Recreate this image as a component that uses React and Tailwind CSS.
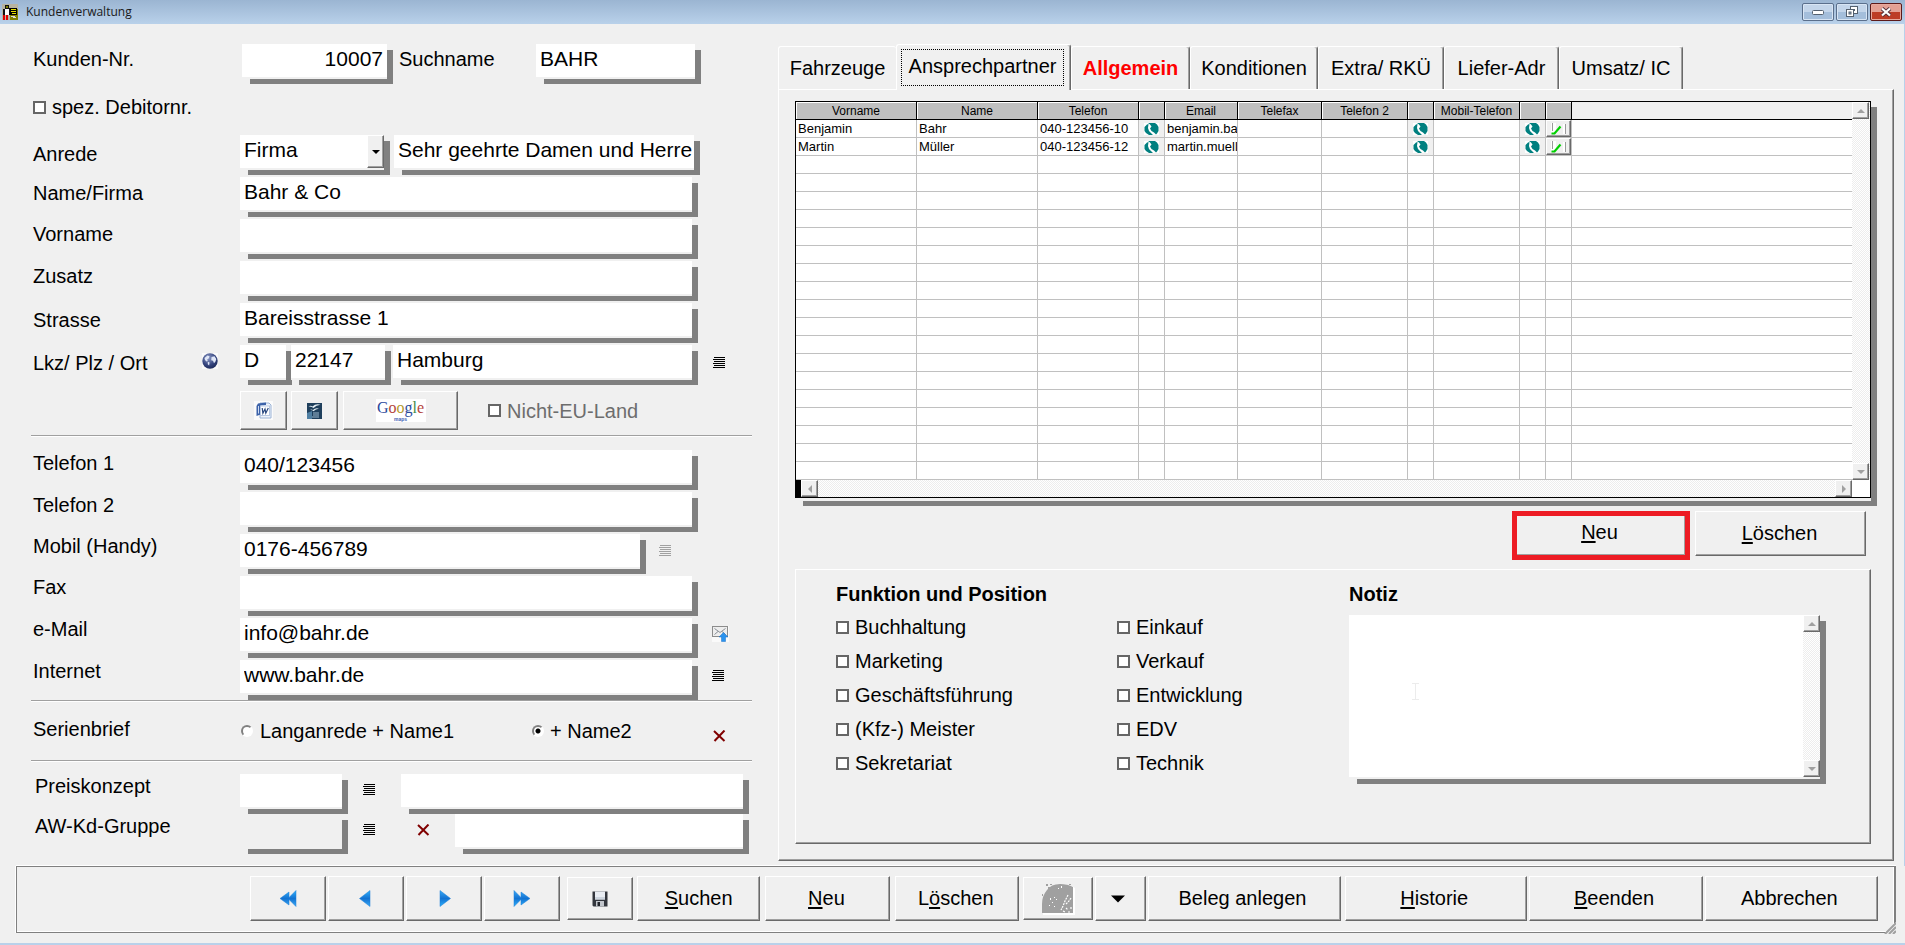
import React, { useState } from 'react';
import clsx from 'clsx';

const SHADOW = 'shadow-[7px_5px_0_-1px_#808080,7px_6px_0_-1px_#808080]';
const BEVEL =
  'border border-t-white border-l-white border-r-[#696969] border-b-[#696969] shadow-[inset_-1px_-1px_0_#a0a0a0]';
const DITHER =
  'bg-[repeating-conic-gradient(#ededed_0_25%,#ffffff_0_50%)] bg-[length:2px_2px]';

const TABS = [
  { name: 'Fahrzeuge', width: 'w-[118px]' },
  { name: 'Ansprechpartner', width: 'w-[175px]' },
  { name: 'Allgemein', width: 'w-[119px]', text: 'text-[#ff0000] font-bold' },
  { name: 'Konditionen', width: 'w-[128px]' },
  { name: 'Extra/ RKÜ', width: 'w-[126px]' },
  { name: 'Liefer-Adr', width: 'w-[115px]' },
  { name: 'Umsatz/ IC', width: 'w-[124px]' },
];

const COLUMNS = [
  { key: 'vorname', title: 'Vorname', width: 'w-[121px]' },
  { key: 'name', title: 'Name', width: 'w-[121px]' },
  { key: 'telefon', title: 'Telefon', width: 'w-[101px]' },
  { key: 'call1', title: '', width: 'w-[26px]', type: 'call' },
  { key: 'email', title: 'Email', width: 'w-[73px]' },
  { key: 'telefax', title: 'Telefax', width: 'w-[84px]' },
  { key: 'telefon2', title: 'Telefon 2', width: 'w-[86px]' },
  { key: 'call2', title: '', width: 'w-[26px]', type: 'call' },
  { key: 'mobil', title: 'Mobil-Telefon', width: 'w-[86px]' },
  { key: 'call3', title: '', width: 'w-[26px]', type: 'call' },
  { key: 'edit', title: '', width: 'w-[26px]', type: 'edit' },
];

const CONTACTS = [
  { vorname: 'Benjamin', name: 'Bahr', telefon: '040-123456-10', email: 'benjamin.ba' },
  { vorname: 'Martin', name: 'Müller', telefon: '040-123456-12', email: 'martin.muell' },
];

const ROWS = [...CONTACTS, ...Array(18).fill(null)];

const FUNCTIONS_LEFT = ['Buchhaltung', 'Marketing', 'Geschäftsführung', '(Kfz-) Meister', 'Sekretariat'];
const FUNCTIONS_RIGHT = ['Einkauf', 'Verkauf', 'Entwicklung', 'EDV', 'Technik'];

/* ---------- Icons ---------- */

const AppIcon = () => (
  <svg width="16" height="16" viewBox="0 0 16 16" shapeRendering="crispEdges">
    <rect width="16" height="16" fill="#b8b4a0" />
    <path d="M8 5h8v11H8z" fill="#808000" />
    <path d="M7 4h8v7H7z" fill="#000" />
    <path d="M9 5h5v1H9zM9 7h5v1H9zM10 9h4v1h-4z" fill="#e8e000" />
    <path d="M9 12h4v1H9zM11 13h3v1h-3z" fill="#ddd" />
    <path d="M3 1h4v4H3zM1 5h2v6H1zM7 5h1v5H7z" fill="#111" />
    <path d="M4 2h2v2H4z" fill="#808000" />
    <path d="M3 5h4v6H3z" fill="#fff" />
    <path d="M1 11h2v5H1zM4 11h2v5H4z" fill="#e00000" />
  </svg>
);

const ListIcon = ({ color = '#000' }) => (
  <svg width="13" height="12" viewBox="0 0 13 12" shapeRendering="crispEdges">
    <path d="M1 0h11v1H1zM0 2h12v1H0zM1 4h11v1H1zM0 6h12v1H0zM1 8h11v1H1zM0 10h12v1H0z" fill={color} />
  </svg>
);

const DeleteIcon = () => (
  <svg width="13" height="12" viewBox="0 0 13 12">
    <path d="M1 1L11.500 11M11.500 0.500L1.500 11" stroke="#800000" strokeWidth="2" fill="none" />
  </svg>
);

const GlobeIcon = () => (
  <svg width="16" height="16" viewBox="0 0 16 16">
    <defs>
      <radialGradient id="globe" cx="0.4" cy="0.3" r="0.75">
        <stop offset="0" stopColor="#8f9cc8" />
        <stop offset="0.6" stopColor="#36467f" />
        <stop offset="1" stopColor="#1a2757" />
      </radialGradient>
    </defs>
    <rect width="16" height="16" fill="#fafafa" />
    <circle cx="8" cy="8" r="7.700" fill="url(#globe)" />
    <path d="M2.500 5l3-2.500 2 .8-.6 2-1.700 1.200.6 1.500-1.300.4L3 7zM5.800 8.800l1.800.8-.5 3-1.300-1.300zM9.500 4l3-.8 1.800 2.800-.8 2.500-1.500 1.800-1-2.500-1.800-.6z" fill="#dfe6f7" />
  </svg>
);

const WordIcon = () => (
  <svg width="19" height="19" viewBox="0 0 19 19">
    <rect width="19" height="19" fill="#fbfbfb" />
    <path d="M6 2h9l2 2v13H6z" fill="#eef3fb" stroke="#9db4d6" />
    <path d="M4 2.500L12 1.500v2.500L6.500 4.500v9L2.500 15V5z" fill="#3c62a9" />
    <path d="M4.500 5v7.500" stroke="#cfdcf2" />
    <rect x="6.500" y="5" width="9" height="9.500" fill="#fff" stroke="#b8c8e2" />
    <path d="M8.200 7l.7 5.200L11 8l.8 4.200L14.300 7" fill="none" stroke="#27467f" strokeWidth="1.200" />
  </svg>
);

const WriterIcon = () => (
  <svg width="15" height="16" viewBox="0 0 15 16">
    <rect width="15" height="16" fill="#1f3f5c" />
    <path d="M0 10l5-2v8H0z" fill="#4f7fa3" />
    <path d="M1.500 3.500q2-1.500 4 0 3-3 8-1.800-4.500.6-7 3.300Q4.500 3 1.500 3.500zM3 7q1.500-1.200 3 0 2.500-2.500 6-1.300-3.500.3-5.500 2.500Q5 6.500 3 7z" fill="#e6f0f6" />
    <path d="M6 10h6M6 12h6M5 14h7" stroke="#9fbcd0" />
  </svg>
);

const MailIcon = () => (
  <svg width="17" height="16" viewBox="0 0 17 16">
    <rect width="17" height="16" fill="#fafafa" />
    <rect x="0.500" y="0.500" width="15" height="10" fill="#eeeeee" stroke="#8c8c8c" />
    <path d="M2.500 2.500L8 6.500l5.500-4M2.500 8.500L6 5.500M13.500 8.500L10 5.500" fill="none" stroke="#8a8f96" />
    <path d="M11.500 6.500l4.500 4.500h-2.500v4.500h-4V11H7z" fill="#2b93ee" stroke="#1a6fc4" strokeWidth="0.500" />
  </svg>
);

const NavIcon = ({ double, back }) => (
  <svg width="18" height="17" viewBox="0 0 18 17" className={back ? 'rotate-180' : ''}>
    <defs>
      <linearGradient id="nav" x1="0" y1="0" x2="0" y2="1">
        <stop offset="0" stopColor="#3aa9f5" />
        <stop offset="0.5" stopColor="#1272d2" />
        <stop offset="1" stopColor="#2fb0fa" />
      </linearGradient>
    </defs>
    {double ? (
      <path d="M1 0.500L9 8.500L1 16.500ZM8 2L17 8.500L8 15Z" fill="url(#nav)" stroke="#1b7fd8" strokeWidth="0.500" />
    ) : (
      <path d="M5 0.500L15.500 8.500L5 16.500Z" fill="url(#nav)" stroke="#1b7fd8" strokeWidth="0.500" />
    )}
  </svg>
);

const DiskIcon = () => (
  <svg width="16" height="16" viewBox="0 0 16 16">
    <path d="M0.500 0.500h15v15h-14l-1-1z" fill="#33363d" />
    <rect x="3" y="0.500" width="10" height="8" fill="#e9edf3" />
    <path d="M3 6h10v2.500H3z" fill="#cdd5df" />
    <rect x="4" y="10" width="8" height="5.500" fill="#c2c6cc" />
    <rect x="5.500" y="11" width="2.500" height="4" fill="#22252b" />
  </svg>
);

const PictureIcon = () => (
  <svg width="34" height="32" viewBox="0 0 34 32">
    <path d="M34 5v27H2V23q0-9 5-15Q12 1 20 1q9 0 14 4z" fill="#fff" />
    <path d="M32 4v26H1V21q0-8 5-14Q10 1 19 1q8 0 13 3z" fill="#a0a0a0" />
    <path d="M5 1h2v2H5zM9 1h2v1H9zM1 11h1v2H1zM3 13h2v1H3zM7 4h2v2H7zM13 3h2v1h-2zM28 1h2v1h-2z" fill="#a0a0a0" />
    <path d="M9 15h1v2H9zM13 14h1v1h-1zM11 19h1v1h-1zM15 16h1v1h-1zM8 22h1v1H8zM20 3h1v2h-1zM13 23h1v1h-1zM17 5h1v1h-1z" fill="#fff" />
    <path d="M27 12l-3 6-2 5-2 4M30 15l-2 3M25 21l3-3M22 28l2 1M25 25l2 2M30 24v3M27 29h3" stroke="#fff" strokeWidth="1.200" fill="none" strokeDasharray="2 1" />
  </svg>
);

const PhoneIcon = () => (
  <svg width="15" height="12" viewBox="0 0 15 12">
    <rect width="15" height="12" fill="#fff" />
    <path d="M4 0h7l2 1.500 1.500 2.500v4L13 10.500l-1 1L10 9.500 7.500 8 6 5.500l1.500-2L6 1.500z" fill="#007f7f" />
    <path d="M3 1.500L4.500 1 4 5l1 3 2.500 2.500L9 12H5L2 10 0.500 8V4z" fill="#007f7f" />
  </svg>
);

const CheckIcon = () => (
  <svg width="16" height="12" viewBox="0 0 16 12">
    <path d="M0 0h5v10H0zM12 1h2v10h-2z" fill="#fff" />
    <path d="M1.500 0v8M14.500 1v10" stroke="#9a9a9a" />
    <path d="M0.500 10.500h3L9.500 3.500" fill="none" stroke="#00d000" strokeWidth="2.200" />
  </svg>
);

const Triangle = ({ dir, color = '#a0a0a0' }) => {
  const shapes = {
    up: 'M0 6L4 2L8 6Z',
    down: 'M0 2L8 2L4 6Z',
    left: 'M6 0L2 4L6 8Z',
    right: 'M2 0L6 4L2 8Z',
  };
  return (
    <svg width="8" height="8" viewBox="0 0 8 8">
      <path d={shapes[dir]} fill={color} />
    </svg>
  );
};

/* ---------- Form controls ---------- */

const Field = ({ className, value = '', bg = 'bg-white', ...rest }) => (
  <input
    type="text"
    defaultValue={value}
    className={clsx(
      'h-[35px] min-w-0 border-b-2 border-[#f0f0f0] px-1 pb-1 text-[21px] leading-[28px] outline-none',
      SHADOW,
      bg,
      className
    )}
    {...rest}
  />
);

const FormRow = ({ id, label, value, leading, icon }) => (
  <div className="flex h-[35px]">
    <label htmlFor={id} className={clsx('w-[209px] shrink-0 pl-[2px]', leading)}>
      {label}
    </label>
    <Field id={id} value={value} className="flex-1" />
    <div className="flex w-[60px] shrink-0 items-center pb-1 pl-5">{icon}</div>
  </div>
);

const Button = ({ className, children, ...rest }) => (
  <button type="button" className={clsx('flex items-center justify-center bg-[#f0f0f0]', BEVEL, className)} {...rest}>
    {children}
  </button>
);

const IconButton = ({ label, children, className }) => (
  <button type="button" aria-label={label} className={clsx('shrink-0', className)}>
    {children}
  </button>
);

const Check = ({ children, className }) => (
  <label className={clsx('flex items-center', className)}>
    <input
      type="checkbox"
      className="mr-[6px] size-[13px] shrink-0 appearance-none border-2 border-[#666666] bg-white checked:bg-[#666666]"
    />
    {children}
  </label>
);

const Radio = ({ children, className, gap, ...rest }) => (
  <label className={clsx('flex items-center', gap, className)}>
    <input
      type="radio"
      name="serienbrief"
      className="size-[12px] shrink-0 appearance-none rounded-full border-2 border-t-[#808080] border-l-[#808080] border-r-white border-b-white bg-white checked:bg-[radial-gradient(circle,#000_0_2px,#fff_3px)]"
      {...rest}
    />
    {children}
  </label>
);

const Divider = () => <hr className="h-[2px] border-t border-b border-t-[#a0a0a0] border-b-white" />;

const ScrollButton = ({ dir, className }) => (
  <Button aria-label={`Scroll ${dir}`} className={clsx('shrink-0', className)}>
    <Triangle dir={dir} />
  </Button>
);

/* ---------- Sections ---------- */

const TitleBar = () => (
  <header className="flex h-6 items-center bg-linear-to-b from-[#9bb5d2] to-[#b9d1ea] pr-[3px] pl-[2px]">
    <AppIcon />
    <h1 className="ml-2 flex-1 font-['Open_Sans',sans-serif] text-[12px] text-[#1a1a1a]">Kundenverwaltung</h1>
    <div className="flex gap-[2px]">
      <button
        type="button"
        aria-label="Minimieren"
        className="flex h-[18px] w-8 items-center justify-center rounded-[2px] border border-[#5a6f8c] bg-linear-to-b from-[#c3d5ea] from-50% to-[#a4bedb] to-50% shadow-[inset_0_0_0_1px_#d8e5f4]"
      >
        <svg width="12" height="6" viewBox="0 0 12 6">
          <rect x="0.500" y="1.500" width="11" height="4" rx="1" fill="#fff" stroke="#54606f" />
        </svg>
      </button>
      <button
        type="button"
        aria-label="Wiederherstellen"
        className="flex h-[18px] w-8 items-center justify-center rounded-[2px] border border-[#5a6f8c] bg-linear-to-b from-[#c3d5ea] from-50% to-[#a4bedb] to-50% shadow-[inset_0_0_0_1px_#d8e5f4]"
      >
        <svg width="13" height="12" viewBox="0 0 13 12">
          <rect x="4.500" y="0.500" width="7" height="7" fill="#fff" stroke="#54606f" />
          <rect x="7" y="3" width="2" height="2" fill="#54606f" />
          <rect x="0.500" y="3.500" width="7" height="7" fill="#fff" stroke="#54606f" />
          <rect x="3" y="6" width="2" height="2" fill="#a4bedb" stroke="#54606f" />
        </svg>
      </button>
      <button
        type="button"
        aria-label="Schließen"
        className="flex h-[18px] w-8 items-center justify-center rounded-[2px] border border-[#5c1a1a] bg-linear-to-b from-[#e3a094] from-50% to-[#bd3c26] to-50% shadow-[inset_0_0_0_1px_#e8a99d]"
      >
        <svg width="12" height="10" viewBox="0 0 12 10">
          <path d="M2 1.500l8 7M10 1.500l-8 7" stroke="#54303a" strokeWidth="4" />
          <path d="M2 1.500l8 7M10 1.500l-8 7" stroke="#fff" strokeWidth="2.200" />
        </svg>
      </button>
    </div>
  </header>
);

const CustomerForm = () => (
  <form className="flex flex-col pt-5 pr-[26px] pl-[31px]">
    <div className="flex h-[35px]">
      <label htmlFor="kundennr" className="w-[211px] shrink-0 pl-[2px] leading-[30px]">
        Kunden-Nr.
      </label>
      <Field id="kundennr" value="10007" className="w-[145px] text-right" />
      <label htmlFor="suchname" className="w-[149px] shrink-0 pl-[12px] leading-[30px]">
        Suchname
      </label>
      <Field id="suchname" value="BAHR" className="flex-1" />
      <div className="w-[57px] shrink-0" />
    </div>

    <div className="flex h-14 items-center pl-[2px]">
      <Check>spez. Debitornr.</Check>
    </div>

    {/* Address */}
    <div className="flex flex-col gap-[7px]">
      <div className="flex h-[35px]">
        <label htmlFor="anrede" className="w-[209px] shrink-0 pl-[2px] leading-[38px]">
          Anrede
        </label>
        <div className={clsx('relative h-[35px] w-[144px] shrink-0', SHADOW)}>
          <select
            id="anrede"
            defaultValue="Firma"
            className="size-full appearance-none border-b-2 border-[#f0f0f0] bg-white pb-1 pl-1 text-[21px] leading-[28px] outline-none"
          >
            <option>Firma</option>
            <option>Herr</option>
            <option>Frau</option>
          </select>
          <span
            className={clsx(
              'pointer-events-none absolute top-0 right-0 flex h-[33px] w-[17px] items-center justify-center bg-[#f0f0f0]',
              BEVEL
            )}
          >
            <Triangle dir="down" color="#000" />
          </span>
        </div>
        <Field aria-label="Briefanrede" value="Sehr geehrte Damen und Herre" className="ml-[10px] flex-1 pr-0" />
        <div className="w-[58px] shrink-0" />
      </div>
      <FormRow id="firma" label="Name/Firma" value="Bahr & Co" leading="leading-[32px]" />
      <FormRow id="vorname" label="Vorname" leading="leading-[30px]" />
      <FormRow id="zusatz" label="Zusatz" leading="leading-[30px]" />
      <FormRow id="strasse" label="Strasse" value="Bareisstrasse 1" leading="leading-[34px]" />
      <div className="flex h-[35px]">
        <label htmlFor="ort" className="w-[171px] shrink-0 pl-[2px] leading-[36px]">
          Lkz/ Plz / Ort
        </label>
        <IconButton label="Karte" className="w-[38px] pb-1">
          <GlobeIcon />
        </IconButton>
        <Field aria-label="Lkz" value="D" className="w-[46px]" />
        <Field aria-label="Plz" value="22147" className="ml-[5px] w-[94px]" />
        <Field id="ort" value="Hamburg" className="ml-2 flex-1" />
        <div className="flex w-[60px] shrink-0 items-center pl-[21px]">
          <IconButton label="Orte">
            <ListIcon />
          </IconButton>
        </div>
      </div>
    </div>

    <div className="mt-[11px] mb-[5px] flex h-[39px] pl-[209px]">
      <Button aria-label="Word" className="w-[47px]">
        <WordIcon />
      </Button>
      <Button aria-label="Writer" className="ml-1 w-[47px]">
        <WriterIcon />
      </Button>
      <Button className="ml-[5px] w-[115px]">
        <span className="flex w-[50px] flex-col items-center bg-white">
          <span className="font-['Liberation_Serif',serif] text-[16px] leading-[18px]">
            <span className="text-[#2a4a9c]">G</span>
            <span className="text-[#b5443c]">o</span>
            <span className="text-[#b39a2c]">o</span>
            <span className="text-[#2a4a9c]">g</span>
            <span className="text-[#3f8a4a]">l</span>
            <span className="text-[#b5443c]">e</span>
          </span>
          <span className="text-[5px] leading-[5px] font-bold text-[#3f62b5]">maps</span>
        </span>
      </Button>
      <Check className="ml-[30px] text-[#6d6d6d]">Nicht-EU-Land</Check>
    </div>

    <Divider />

    {/* Contact */}
    <div className="mt-[13px] mb-[5px] flex flex-col gap-[7px]">
      <FormRow id="telefon1" label="Telefon 1" value="040/123456" leading="leading-[26px]" />
      <FormRow id="telefon2" label="Telefon 2" leading="leading-[26px]" />
      <div className="flex h-[35px]">
        <label htmlFor="mobil" className="w-[209px] shrink-0 pl-[2px] leading-6">
          Mobil (Handy)
        </label>
        <Field id="mobil" value="0176-456789" className="flex-1" />
        <div className="flex w-[112px] shrink-0 items-center pb-[2px] pl-[19px]">
          <IconButton label="Mobil-Liste">
            <ListIcon color="#a0a0a0" />
          </IconButton>
        </div>
      </div>
      <FormRow id="fax" label="Fax" leading="leading-[22px]" />
      <FormRow
        id="email"
        label="e-Mail"
        value="info@bahr.de"
        leading="leading-[22px]"
        icon={
          <IconButton label="Mail senden">
            <MailIcon />
          </IconButton>
        }
      />
      <FormRow
        id="internet"
        label="Internet"
        value="www.bahr.de"
        leading="leading-[22px]"
        icon={
          <IconButton label="Webseite">
            <ListIcon />
          </IconButton>
        }
      />
    </div>

    <Divider />

    <div className="flex h-[58px] items-center">
      <span className="w-[210px] shrink-0 pb-1 pl-[2px]">Serienbrief</span>
      <Radio className="w-[291px]" gap="gap-[7px]">
        Langanrede + Name1
      </Radio>
      <Radio className="flex-1" gap="gap-[6px]" defaultChecked>
        + Name2
      </Radio>
      <IconButton label="Serienbrief löschen" className="mr-[26px] pt-[10px]">
        <DeleteIcon />
      </IconButton>
    </div>

    <Divider />

    <div className="mt-3 flex flex-col gap-[5px]">
      <div className="flex h-[35px]">
        <label htmlFor="preiskonzept" className="w-[209px] shrink-0 pl-1 leading-6">
          Preiskonzept
        </label>
        <Field id="preiskonzept" className="w-[102px]" />
        <IconButton label="Preiskonzepte" className="mx-[21px] pb-[3px]">
          <ListIcon />
        </IconButton>
        <Field aria-label="Preiskonzept Name" className="ml-1 flex-1" />
        <div className="w-[9px] shrink-0" />
      </div>
      <div className="flex h-[35px]">
        <label htmlFor="gruppe" className="w-[209px] shrink-0 pl-1 leading-6">
          AW-Kd-Gruppe
        </label>
        <Field id="gruppe" bg="bg-[#f0f0f0]" className="w-[102px]" />
        <IconButton label="Gruppen" className="mx-[21px] pb-[3px]">
          <ListIcon />
        </IconButton>
        <IconButton label="Gruppe löschen" className="mr-[21px] ml-5 pb-[3px]">
          <DeleteIcon />
        </IconButton>
        <Field aria-label="Gruppe Name" className="ml-1 flex-1" />
        <div className="w-[9px] shrink-0" />
      </div>
    </div>
  </form>
);

const Cell = ({ column, row }) => {
  if (row && column.type === 'call') {
    return (
      <button type="button" aria-label="Anrufen" className="flex h-[17px] w-full items-center justify-center bg-[#f0f0f0]">
        <PhoneIcon />
      </button>
    );
  }
  if (row && column.type === 'edit') {
    return (
      <Button aria-label="Bearbeiten" className="h-[17px] w-full">
        <CheckIcon />
      </Button>
    );
  }
  return (
    <div className="h-[17px] overflow-hidden pl-[2px] text-[13px] leading-[17px] whitespace-nowrap">
      {row ? row[column.key] : ''}
    </div>
  );
};

const ContactTable = () => (
  <div className={clsx('bg-[#f0f0f0] pb-[3px]', SHADOW)}>
    <div className="border border-black bg-white">
      <div className="flex">
        <table className="w-full flex-1 table-fixed border-separate border-spacing-0">
          <thead>
            <tr>
              {COLUMNS.map((column) => (
                <th
                  key={column.key}
                  className={clsx(
                    'h-[18px] border-r border-b border-black bg-[#c0c0c0] p-0 pt-px text-[12px] leading-4 font-normal shadow-[inset_1px_1px_0_#ffffff]',
                    column.width
                  )}
                >
                  {column.title}
                </th>
              ))}
              <th className="border-b border-black bg-[#f0f0f0] p-0" />
            </tr>
          </thead>
          <tbody>
            {ROWS.map((row, index) => (
              <tr key={index}>
                {COLUMNS.map((column) => (
                  <td key={column.key} className="border-r border-b border-[#c0c0c0] p-0">
                    <Cell column={column} row={row} />
                  </td>
                ))}
                <td className="border-b border-[#c0c0c0] p-0" />
              </tr>
            ))}
          </tbody>
        </table>
        <div className={clsx('flex w-[18px] shrink-0 flex-col justify-between', DITHER)}>
          <ScrollButton dir="up" className="h-[17px] w-[17px]" />
          <ScrollButton dir="down" className="h-[17px] w-[17px]" />
        </div>
      </div>
      <div className="flex h-[17px]">
        <div className="w-[5px] bg-black" />
        <div className={clsx('flex flex-1 justify-between', DITHER)}>
          <ScrollButton dir="left" className="w-[17px]" />
          <ScrollButton dir="right" className="w-[17px]" />
        </div>
        <div className="w-[18px] bg-white" />
      </div>
    </div>
  </div>
);

const DetailPanel = () => (
  <div className={clsx('mt-[9px] flex h-[275px] pr-[50px] pl-10', BEVEL)}>
    <fieldset className="w-[513px] shrink-0 pt-[10px]">
      <legend className="float-left w-full leading-7 font-bold">Funktion und Position</legend>
      <div className="flex w-full pt-[2px]">
        <div className="w-[281px]">
          {FUNCTIONS_LEFT.map((name) => (
            <Check key={name} className="h-[34px]">
              {name}
            </Check>
          ))}
        </div>
        <div>
          {FUNCTIONS_RIGHT.map((name) => (
            <Check key={name} className="h-[34px]">
              {name}
            </Check>
          ))}
        </div>
      </div>
    </fieldset>
    <div className="flex-1 pt-[10px]">
      <label htmlFor="notiz" className="block leading-7 font-bold">
        Notiz
      </label>
      <div className={clsx('relative mt-[7px] flex h-[164px] border-b-2 border-[#f0f0f0] bg-white', SHADOW)}>
        <textarea id="notiz" className="min-w-0 flex-1 resize-none p-1 outline-none" />
        <div className={clsx('flex w-[17px] flex-col justify-between', DITHER)}>
          <ScrollButton dir="up" className="h-[17px]" />
          <ScrollButton dir="down" className="h-[17px]" />
        </div>
        <svg width="7" height="17" viewBox="0 0 7 17" className="pointer-events-none absolute top-[68px] left-[63px]">
          <path d="M0 0.500h7M3.500 1v15M0 16.500h7" stroke="#ececec" />
        </svg>
      </div>
    </div>
  </div>
);

const CustomerTabs = () => {
  const [active, setActive] = useState('Ansprechpartner');

  return (
    <section className="pt-5 pr-[10px]">
      <div role="tablist" className="flex h-[45px] items-end">
        {TABS.map((tab) => {
          const selected = tab.name === active;
          return (
            <button
              key={tab.name}
              type="button"
              role="tab"
              aria-selected={selected}
              onClick={() => setActive(tab.name)}
              className={clsx(
                'shrink-0 rounded-t-[3px] border-t border-l border-t-white border-l-white bg-[#f0f0f0]',
                tab.width,
                tab.text,
                selected ? 'relative -mb-px h-[46px] px-1 pt-[3px] pb-1' : 'h-[43px]',
                tab.name === 'Fahrzeuge' ? '' : 'border-r border-r-[#696969] shadow-[inset_-1px_0_0_#a0a0a0]'
              )}
            >
              {selected ? (
                <span className="mr-[2px] flex h-[37px] items-center justify-center border border-dotted border-black pb-[2px]">
                  {tab.name}
                </span>
              ) : (
                tab.name
              )}
            </button>
          );
        })}
      </div>

      <div className={clsx('pt-[11px] pr-[22px] pb-4 pl-4', BEVEL)}>
        <ContactTable />
        <div className="mt-[10px] flex h-[49px] justify-end gap-[5px] pr-[5px]">
          <div className="w-[178px] border-[5px] border-[#ed1c24]">
            <button
              type="button"
              className="flex h-full w-full items-center justify-center border-r border-b border-[#a0a0a0] bg-[#f0f0f0] pr-[2px] pb-[6px]"
            >
              <span>
                <u className="underline-offset-2">N</u>eu
              </span>
            </button>
          </div>
          <Button className="h-[45px] w-[171px] pr-[2px] pb-[2px]">
            <span>
              <u className="underline-offset-2">L</u>öschen
            </span>
          </Button>
        </div>
        <DetailPanel />
      </div>
    </section>
  );
};

const Toolbar = () => (
  <footer className="mr-[9px] mb-[10px] ml-4 shadow-[0_-1px_0_#ffffff,-1px_0_0_#ffffff]">
    <div className="relative flex h-[67px] items-start gap-[2px] border border-r-2 border-[#808080] pt-[9px] pr-4 pl-[233px] shadow-[inset_-1px_-1px_0_#ffffff]">
      <Button aria-label="Erster" className="h-[45px] w-[76px] shrink-0">
        <NavIcon double back />
      </Button>
      <Button aria-label="Zurück" className="h-[45px] w-[76px] shrink-0">
        <NavIcon back />
      </Button>
      <Button aria-label="Weiter" className="h-[45px] w-[76px] shrink-0">
        <NavIcon />
      </Button>
      <Button aria-label="Letzter" className="h-[45px] w-[76px] shrink-0">
        <NavIcon double />
      </Button>
      <Button aria-label="Speichern" className="mt-px ml-[5px] h-[43px] w-[66px] shrink-0">
        <DiskIcon />
      </Button>
      <Button className="ml-[2px] h-[45px] grow basis-[123px] pb-[2px]">
        <span>
          <u className="underline-offset-2">S</u>uchen
        </span>
      </Button>
      <Button className="ml-[3px] h-[45px] grow basis-[124px] pr-[2px] pb-[2px]">
        <span>
          <u className="underline-offset-2">N</u>eu
        </span>
      </Button>
      <Button className="ml-[3px] h-[45px] grow basis-[124px] pr-[2px] pb-[2px]">
        <span>
          L<u className="underline-offset-2">ö</u>schen
        </span>
      </Button>
      <Button aria-label="Bild" className="mt-px ml-[2px] h-[43px] w-[70px] shrink-0">
        <PictureIcon />
      </Button>
      <Button aria-label="Bild auswählen" className="h-[45px] w-[51px] shrink-0 pr-1">
        <svg width="14" height="8" viewBox="0 0 14 8">
          <path d="M0 0.500H14L7 7.500Z" fill="#000" />
        </svg>
      </Button>
      <Button className="h-[45px] grow basis-[193px] pr-1 pb-[2px]">Beleg anlegen</Button>
      <Button className="ml-[2px] h-[45px] grow basis-[182px] pr-1 pb-[2px]">
        <span>
          <u className="underline-offset-2">H</u>istorie
        </span>
      </Button>
      <Button className="h-[45px] grow basis-[173px] pr-1 pb-[2px]">
        <span>
          <u className="underline-offset-2">B</u>eenden
        </span>
      </Button>
      <Button className="h-[45px] grow basis-[173px] pr-1 pb-[2px]">Abbrechen</Button>
      <svg width="12" height="12" viewBox="0 0 12 12" className="absolute -right-[2px] -bottom-[2px]">
        <path d="M0 12L12 0V12Z" fill="#f0f0f0" />
        <path d="M1 12L12 1M5 12L12 5M9 12L12 9" stroke="#a0a0a0" strokeWidth="2" />
      </svg>
    </div>
  </footer>
);

const App = () => (
  <div className="flex min-h-screen flex-col border-b-2 border-[#b9d1ea] bg-[#f0f0f0] font-['Liberation_Sans',Arial,sans-serif] text-[20px] leading-6 text-black">
    <TitleBar />
    <main className="grid flex-1 grid-cols-[minmax(0,778fr)_minmax(0,1126fr)] border-r border-[#b9d1ea]">
      <CustomerForm />
      <CustomerTabs />
    </main>
    <Toolbar />
  </div>
);

export default App;
